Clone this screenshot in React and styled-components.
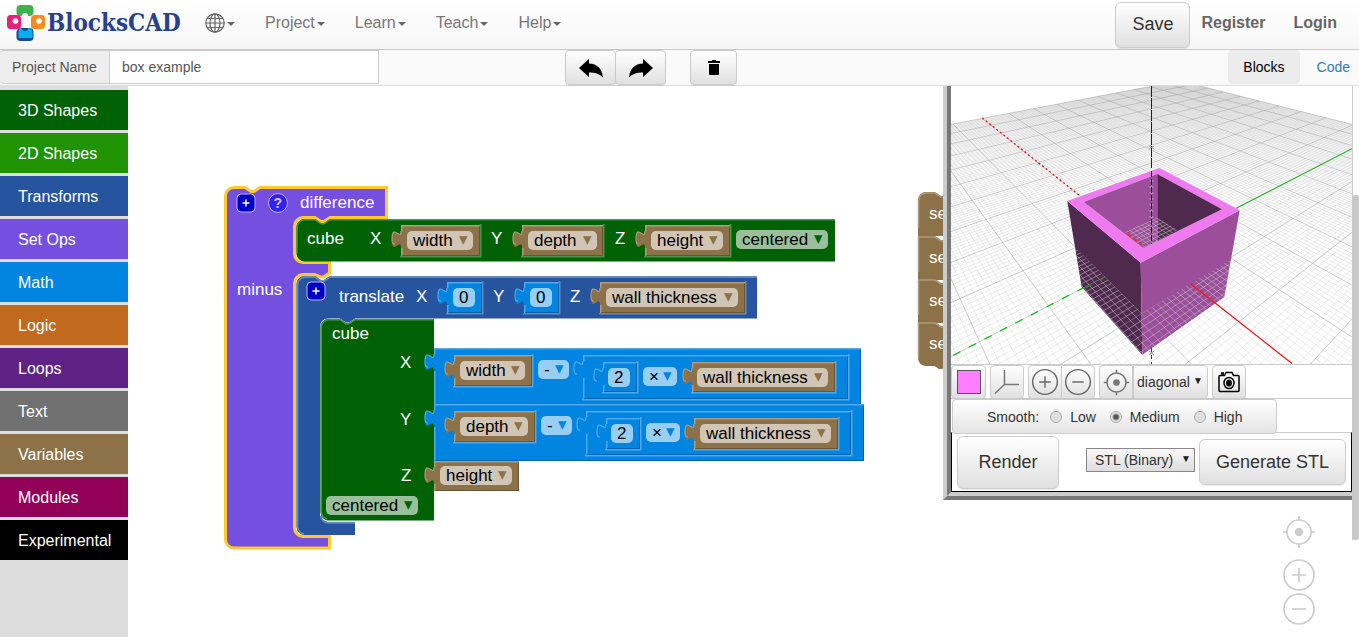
import React from "react";
import styled, { createGlobalStyle } from "styled-components";

const Global = createGlobalStyle`
  *, *::before, *::after { box-sizing: border-box; }
  body { margin: 0; background: #fff; font-family: "Liberation Sans", Arial, sans-serif; font-size: 14px; color: #333; }
  button, input, select { font-family: inherit; margin: 0; }
`;

const colors = {
  shapes: "#006205",
  transforms: "#26549f",
  setOps: "#744fe0",
  math: "#0185e1",
  variables: "#8c7149",
};

const categories = [
  ["3D Shapes", colors.shapes],
  ["2D Shapes", "#209303"],
  ["Transforms", colors.transforms],
  ["Set Ops", colors.setOps],
  ["Math", colors.math],
  ["Logic", "#c1691f"],
  ["Loops", "#5e2385"],
  ["Text", "#717171"],
  ["Variables", colors.variables],
  ["Modules", "#920057"],
  ["Experimental", "#000000"],
];

/* ---------- page ---------- */

const Page = styled.div`
  display: flex;
  flex-direction: column;
  min-height: 100vh;
`;

const Navbar = styled.header`
  display: flex;
  align-items: center;
  height: 50px;
  padding-left: 7px;
  padding-right: 22px;
  background: linear-gradient(#fff, #f6f6f6);
  border-bottom: 1px solid #c8c8c8;
`;

const Brand = styled.a`
  display: flex;
  align-items: center;
  width: 183px;
  height: 44px;
  padding-bottom: 3px;
  color: #27408f;
  font-family: "DejaVu Serif Condensed", "DejaVu Serif", serif;
  font-size: 24px;
  font-weight: bold;
  line-height: 28px;
  text-decoration: none;
  white-space: nowrap;
`;

const Menu = styled.nav`
  display: flex;
  flex: 1;
`;

const MenuButton = styled.button`
  display: flex;
  align-items: center;
  height: 44px;
  padding: 0 15px 4px;
  border: 0;
  background: none;
  color: #777;
  font-size: 16px;
  line-height: 20px;
  &::after {
    content: "";
    margin-left: 2px;
    margin-top: 2px;
    border: 4px solid transparent;
    border-top-color: #666;
    border-bottom: 0;
  }
`;

const Raised = styled.button`
  display: flex;
  align-items: center;
  justify-content: center;
  padding: 0;
  border: 1px solid #ccc;
  border-radius: ${(p) => p.$radius || "4px"};
  background: linear-gradient(#fff, #e0e0e0);
  box-shadow: 0 1px 1px rgba(0, 0, 0, 0.08);
  color: #333;
  font-size: 18px;
  width: ${(p) => p.$w}px;
  height: ${(p) => p.$h}px;
`;

const Account = styled.div`
  display: flex;
  align-items: center;
  & > a {
    margin-left: 28px;
    padding-bottom: 4px;
    color: #666;
    font-size: 16px;
    font-weight: bold;
    text-decoration: none;
  }
  & > button + a {
    margin-left: 11px;
  }
`;

const Toolbar = styled.div`
  display: flex;
  height: 36px;
  background: #fafafa;
  border-bottom: 1px solid #ddd;
`;

const NameLabel = styled.label`
  display: flex;
  align-items: center;
  width: 110px;
  height: 34px;
  padding-left: 12px;
  background: #eee;
  border: 1px solid #ccc;
  border-width: 1px 0 1px 0;
  border-radius: 4px 0 0 4px;
  color: #555;
`;

const NameInput = styled.input`
  width: 270px;
  height: 34px;
  padding: 0 12px;
  border: 1px solid #ccc;
  margin-left: -1px;
  color: #555;
  font-size: 14px;
`;

const Actions = styled.div`
  display: flex;
  flex: 1;
  gap: 24px;
  padding-left: 186px;
`;

const Group = styled.div`
  display: flex;
  & > * + * {
    margin-left: -1px;
  }
`;

const Tabs = styled.nav`
  display: flex;
`;

const Tab = styled.a`
  display: flex;
  align-items: center;
  height: 34px;
  padding: 0 ${(p) => (p.$active ? 15 : 9)}px 0 ${(p) => (p.$active ? 15 : 17)}px;
  border-radius: 4px;
  background: ${(p) => (p.$active ? "#ececec" : "transparent")};
  color: ${(p) => (p.$active ? "#000" : "#337ab7")};
  text-decoration: none;
`;

const Main = styled.main`
  display: flex;
  flex: 1;
`;

const Sidebar = styled.nav`
  display: flex;
  flex-direction: column;
  gap: 3px;
  width: 128px;
  padding-top: 4px;
  background: #ddd;
`;

const Category = styled.button`
  height: 40px;
  padding: 2px 0 0 18px;
  border: 0;
  background: ${(p) => p.$color};
  color: #fff;
  font-size: 16px;
  text-align: left;
`;

/* ---------- block workspace ---------- */

const Workspace = styled.section`
  position: relative;
  flex: 1;
  overflow: hidden;
`;

const BlockLayer = styled.svg`
  position: absolute;
  inset: 0;
  width: 100%;
  height: 100%;
  font-family: "Liberation Sans", Arial, sans-serif;
  font-size: 17px;
`;

const FieldBox = styled.span`
  position: absolute;
  left: ${(p) => p.$x}px;
  top: ${(p) => p.$y}px;
  width: ${(p) => p.$w}px;
  height: 19px;
  border-radius: 5px;
  background: ${(p) => p.$tint};
  &::after {
    content: "${(p) => (p.$menu ? "▾" : "")}";
    position: absolute;
    right: 5px;
    top: -1px;
    color: ${(p) => p.$color};
    font-size: 17px;
    line-height: 19px;
    pointer-events: none;
  }
`;

const FieldSelect = styled.select`
  appearance: none;
  display: block;
  width: 100%;
  height: 19px;
  padding: 0 0 0 6px;
  border: 0;
  background: none;
  color: #000;
  font-size: 17px;
  line-height: 19px;
`;

const FieldInput = styled.input`
  display: block;
  width: 100%;
  height: 19px;
  padding: 0 0 0 6px;
  border: 0;
  background: none;
  color: #000;
  font-size: 17px;
  line-height: 19px;
`;

const TAB = "v6 c0,11 -9,-9 -9,8.5 s9,-3 9,8.5";
const NOTCH = "l6,4 3,0 6,-4";

const tints = {
  math: "#99cef3",
  variables: "#d1c6b6",
  shapes: "#99c09b",
};

const valueBlocks = [
  { x: 401, y: 225, w: 79, h: 31, kind: "variables", nested: "shapes" },
  { x: 522, y: 225, w: 81, h: 31, kind: "variables", nested: "shapes" },
  { x: 645, y: 225, w: 85, h: 31, kind: "variables", nested: "shapes" },
  { x: 447, y: 282, w: 35, h: 31, kind: "math", nested: "transforms" },
  { x: 524, y: 282, w: 35, h: 31, kind: "math", nested: "transforms" },
  { x: 600, y: 282, w: 145, h: 31, kind: "variables", nested: "transforms" },
  { x: 434, y: 348, w: 427, h: 57, kind: "math" },
  { x: 454, y: 355, w: 78, h: 31, kind: "variables", nested: "math" },
  { x: 583, y: 355, w: 265, h: 44, kind: "math", nested: "math" },
  { x: 603, y: 362, w: 34, h: 30, kind: "math", nested: "math" },
  { x: 692, y: 362, w: 143, h: 30, kind: "variables", nested: "math" },
  { x: 434, y: 404, w: 430, h: 57, kind: "math" },
  { x: 454, y: 411, w: 81, h: 31, kind: "variables", nested: "math" },
  { x: 586, y: 411, w: 265, h: 44, kind: "math", nested: "math" },
  { x: 606, y: 418, w: 34, h: 31, kind: "math", nested: "math" },
  { x: 694, y: 418, w: 144, h: 31, kind: "variables", nested: "math" },
  { x: 434, y: 461, w: 85, h: 30, kind: "variables" },
];

const lights = {
  math: "#4fa9ea",
  variables: "#ae9b80",
  shapes: "#4d914f",
  transforms: "#6787bc",
};

const fields = [
  { x: 407, y: 231, w: 66, text: "width", kind: "variables" },
  { x: 528, y: 231, w: 69, text: "depth", kind: "variables" },
  { x: 651, y: 231, w: 72, text: "height", kind: "variables" },
  { x: 736, y: 230, w: 92, text: "centered", kind: "shapes" },
  { x: 453, y: 288, w: 22, text: "0", kind: "math", input: true },
  { x: 530, y: 288, w: 22, text: "0", kind: "math", input: true },
  { x: 606, y: 288, w: 132, text: "wall thickness", kind: "variables" },
  { x: 460, y: 361, w: 65, text: "width", kind: "variables" },
  { x: 538, y: 360, w: 31, text: "-", kind: "math" },
  { x: 608, y: 368, w: 22, text: "2", kind: "math", input: true },
  { x: 643, y: 367, w: 34, text: "×", kind: "math" },
  { x: 697, y: 368, w: 131, text: "wall thickness", kind: "variables" },
  { x: 460, y: 417, w: 68, text: "depth", kind: "variables" },
  { x: 541, y: 416, w: 31, text: "-", kind: "math" },
  { x: 611, y: 424, w: 22, text: "2", kind: "math", input: true },
  { x: 646, y: 423, w: 34, text: "×", kind: "math" },
  { x: 700, y: 424, w: 131, text: "wall thickness", kind: "variables" },
  { x: 440, y: 466, w: 72, text: "height", kind: "variables" },
  { x: 326, y: 496, w: 92, text: "centered", kind: "shapes" },
];

const labels = [
  ["difference", 300, 208],
  ["minus", 237, 295],
  ["cube", 307, 244],
  ["X", 370, 244],
  ["Y", 491, 244],
  ["Z", 615, 244],
  ["translate", 339, 302],
  ["X", 416, 302],
  ["Y", 493, 302],
  ["Z", 570, 302],
  ["cube", 332, 339],
  ["X", 400, 368],
  ["Y", 400, 425],
  ["Z", 401, 481],
];

/* Block coordinates are stored relative to the window; the workspace starts here. */
const ORIGIN = { x: 128, y: 86 };

function ValueBlock({ x, y, w, h, kind, nested }) {
  return (
    <g>
      <path d={`M${x},${y} ${TAB} V${y + h} H${x + w} V${y} Z`} fill={colors[kind]} />
      <path
        d={`M${x + 0.75},${y + h} V${y + 23} m0,-17 V${y + 0.75} H${x + w}`}
        fill="none"
        stroke={lights[kind]}
        strokeWidth="1.5"
      />
      <path d={`M${x},${y + 6} c0,11 -9,-9 -9,8.5 q0,5 3,4.5`} fill="none" stroke={lights[kind]} strokeWidth="1.2" />
      <path d={`M${x + w - 0.5},${y + 1} V${y + h - 0.5} H${x + 1}`} fill="none" stroke="#000" strokeOpacity=".25" />
      {nested && (
        <path
          d={`M${x + w + 0.75},${y - 1} V${y + h + 0.75} H${x - 1}`}
          fill="none"
          stroke={lights[nested]}
          strokeWidth="1.5"
        />
      )}
    </g>
  );
}

function PlusIcon({ x, y }) {
  return (
    <g>
      <rect x={x} y={y} width="18" height="18" rx="4" fill="#0000c8" stroke="#b9b4f0" />
      <path d={`M${x + 5.5},${y + 9} h7 M${x + 9},${y + 5.5} v7`} stroke="#fff" strokeWidth="1.5" />
    </g>
  );
}

function Blocks() {
  return (
    <BlockLayer aria-label="Block diagram">
      <g transform={`translate(${-ORIGIN.x},${-ORIGIN.y})`}>
        <path
          d={`M225.5,196 a8.5,8.5 0 0 1 8.5,-8.5 H245 ${NOTCH} H386.5 V217.5 H330 l-6,4 -3,0 -6,-4 H303 a8.5,8.5 0 0 0 -8.5,8.5 V254 a8.5,8.5 0 0 0 8.5,8.5 H329.5 V273 l-6,4 -3,0 -6,-2.5 H303 a8.5,8.5 0 0 0 -8.5,8.5 V528 a8.5,8.5 0 0 0 8.5,8.5 H329.5 V548 H234 a8.5,8.5 0 0 1 -8.5,-8.5 Z`}
          fill={colors.setOps}
          stroke="#ffc82f"
          strokeWidth="3"
        />
        <path
          d={`M296.5,227 a8,8 0 0 1 8,-8 H315 ${NOTCH} H835 V261.5 H305 a8,8 0 0 1 -8.5,-8 Z`}
          fill={colors.shapes}
        />
        <path
          d={`M297,253 V228 a8,8 0 0 1 8,-8.25 H315 ${NOTCH} H835`}
          fill="none"
          stroke={lights.shapes}
          strokeWidth="1.5"
        />
        <path
          d={`M296.5,284 a8,8 0 0 1 8,-8 H315 ${NOTCH} H757 V318.5 H355 l-6,4 -3,0 -6,-4 H328 a8,8 0 0 0 -8,8 V514 a8,8 0 0 0 8,8 H355 V535 H305 a8,8 0 0 1 -8.5,-8 Z`}
          fill={colors.transforms}
        />
        <path
          d={`M304,534 a8,8 0 0 1 -6.5,-7 V285 a8,8 0 0 1 8,-8 H315 ${NOTCH} H757 M320.75,516 a8,8 0 0 0 7.5,6.75 H355`}
          fill="none"
          stroke={lights.transforms}
          strokeWidth="1.8"
        />
        <path
          d={`M320.5,327 a8,8 0 0 1 8,-8 H340 ${NOTCH} H434 V520.5 H329 a8,8 0 0 1 -8.5,-8 Z`}
          fill={colors.shapes}
        />
        <path
          d={`M327,519 a8,8 0 0 1 -5.7,-7 V328 a8,8 0 0 1 8,-8.25 H340 ${NOTCH} H434`}
          fill="none"
          stroke={lights.shapes}
          strokeWidth="1.5"
        />
        {valueBlocks.map((b) => (
          <ValueBlock key={`${b.x}-${b.y}`} {...b} />
        ))}
        <PlusIcon x={237} y={194} />
        <PlusIcon x={307} y={282} />
        <circle cx="278" cy="203" r="9.5" fill="#3322ee" stroke="#b9b4f0" />
        <text x="273.5" y="208" fill="#d0cdfa" fontSize="14" fontWeight="bold">
          ?
        </text>
        {labels.map(([text, x, y]) => (
          <text key={`${x}-${y}`} x={x} y={y} fill="#fff">
            {text}
          </text>
        ))}
        {[192, 236, 279, 322].map((y, i) => (
          <g key={y}>
            <path
              d={`M918,${y + (i ? 0 : 8)} ${i ? "" : "a8,8 0 0 1 8,-8"} H935 ${NOTCH} H990 V${y + 44} ${
                i === 3 ? "H926 a8,8 0 0 1 -8,-8" : "H918"
              } Z`}
              fill={colors.variables}
            />
            {i === 3 && <path d="M933,365 l6,4 3,0 6,-4 Z" fill={colors.variables} />}
            <path
              d={`M918.5,${y + 36} V${y + (i ? 1 : 9)} ${i ? "" : "a8,8 0 0 1 8,-8"} H935 ${NOTCH}`}
              fill="none"
              stroke={lights.variables}
              strokeWidth="1.5"
            />
            <text x="929" y={y + 27} fill="#fff">
              set
            </text>
          </g>
        ))}
      </g>
    </BlockLayer>
  );
}

function Field({ x, y, w, text, kind, input }) {
  return (
    <FieldBox $x={x - ORIGIN.x} $y={y - ORIGIN.y} $w={w} $tint={tints[kind]} $color={colors[kind]} $menu={!input}>
      {input ? (
        <FieldInput aria-label="Number" defaultValue={text} />
      ) : (
        <FieldSelect aria-label={text} defaultValue={text}>
          <option>{text}</option>
        </FieldSelect>
      )}
    </FieldBox>
  );
}

/* ---------- 3D viewer ---------- */

const Viewer = styled.aside`
  position: absolute;
  top: 0;
  right: 7px;
  width: 409px;
  background: #fff;
  border: 8px ridge #ccc;
  border-width: 0 0 8px 8px;
`;

const Scene = styled.svg`
  display: block;
  width: 100%;
  height: 278px;
`;

const ViewRow = styled.div`
  display: flex;
  gap: 4px;
  height: 34px;
  border-top: 1px solid #ccc;
`;

const SmoothBar = styled.fieldset`
  display: flex;
  align-items: center;
  width: 325px;
  height: 35px;
  margin: 0 0 0 1px;
  padding: 0 0 0 34px;
  border: 1px solid #ccc;
  border-radius: 4px;
  background: linear-gradient(#fff, #e4e4e4);
`;

const SmoothTitle = styled.span`
  margin-right: 11px;
`;

const RadioLabel = styled.label`
  display: flex;
  align-items: center;
  gap: 8px;
  margin-right: 14px;
`;

const Radio = styled.input`
  appearance: none;
  width: 12px;
  height: 12px;
  margin: 0;
  border: 1px solid #aaa;
  border-radius: 50%;
  background: ${(p) =>
    p.defaultChecked ? "radial-gradient(circle, #555 0 2px, #e4e4e4 4px)" : "#e0e0e0"};
`;

const RenderBar = styled.div`
  display: flex;
  align-items: center;
  height: 60px;
  padding: 0 5px;
  border: 1px solid #000;
  border-top-color: #ccc;
`;

const SelectBox = styled.span`
  position: relative;
  display: flex;
  margin-left: ${(p) => (p.$plain ? 0 : 27)}px;
  margin-right: ${(p) => (p.$plain ? 0 : 4)}px;
  margin-bottom: ${(p) => (p.$plain ? 0 : 5)}px;
  &::after {
    content: "▼";
    position: absolute;
    right: ${(p) => (p.$plain ? 5 : 4)}px;
    top: ${(p) => (p.$plain ? 10 : 5)}px;
    font-size: 10px;
    line-height: 12px;
    color: #222;
    pointer-events: none;
  }
`;

const ViewSelect = styled.select`
  appearance: none;
  width: 75px;
  height: 34px;
  padding: 0 0 0 3px;
  border: 1px solid #ccc;
  border-radius: 0 4px 4px 0;
  background: linear-gradient(#fff, #e0e0e0);
  color: #333;
  font-size: 14px;
`;

const FormatSelect = styled.select`
  appearance: none;
  width: 109px;
  height: 24px;
  padding: 0 0 0 8px;
  border: 1px solid #888;
  border-radius: 0;
  background: linear-gradient(#f8f8f8, #ddd);
  color: #333;
  font-size: 14px;
`;

const PushRight = styled.span`
  margin-left: auto;
`;

const Scrollbar = styled.div`
  position: absolute;
  top: 0;
  right: 0;
  width: 7px;
  height: 454px;
  border-left: 1px solid #ccc;
  background: #fff;
  &::after {
    content: "";
    position: absolute;
    top: 109px;
    bottom: 0;
    left: -1px;
    right: 0;
    border-radius: 3px;
    background: #c8c8c8;
  }
`;

const ZoomTools = styled.div`
  position: absolute;
  top: 429px;
  right: 43px;
  display: flex;
  flex-direction: column;
`;

const BareButton = styled.button`
  display: block;
  width: 34px;
  height: 34px;
  margin-bottom: ${(p) => p.$after || 0}px;
  padding: 0;
  border: 0;
  background: none;
  color: #ccc;
`;

const CAMERA = { distance: 61, focal: 335.6, shift: -5, tilt: (55 * Math.PI) / 180, turn: (-51 * Math.PI) / 180 };

function rotated(x, y) {
  const { turn, tilt, distance } = CAMERA;
  const u = x * Math.cos(turn) - y * Math.sin(turn);
  const v = x * Math.sin(turn) + y * Math.cos(turn);
  return { u, up: v * Math.cos(tilt) + CAMERA.shift, depth: distance + v * Math.sin(tilt) };
}

function groundLine(a, b) {
  let p = rotated(...a);
  let q = rotated(...b);
  const near = 12;
  if (p.depth < near && q.depth < near) return "";
  const cut = (from, to) => {
    const t = (near - from.depth) / (to.depth - from.depth);
    return { u: from.u + (to.u - from.u) * t, up: from.up + (to.up - from.up) * t, depth: near };
  };
  if (p.depth < near) p = cut(p, q);
  if (q.depth < near) q = cut(q, p);
  const s = (r) =>
    `${(200.5 + (CAMERA.focal * r.u) / r.depth).toFixed(1)},${(139 - (CAMERA.focal * r.up) / r.depth).toFixed(1)}`;
  return `M${s(p)}L${s(q)}`;
}

function gridPath(step) {
  let d = "";
  for (let i = -100; i <= 100; i += step) {
    if (step === 1 && i % 10 === 0) continue;
    d += groundLine([i, -100], [i, 100]) + groundLine([-100, i], [100, i]);
  }
  return d;
}

const minorGrid = gridPath(1);
const majorGrid = gridPath(10);

function ViewerScene() {
  return (
    <Scene viewBox="0 0 401 278" role="img" aria-label="Rendered open box on a grid">
      <defs>
        <clipPath id="sunk">
          <path d="M124.7,162 L190.7,227 L280.7,173 L273.3,211 L191.3,268.7 L130.7,201 Z M174,146 L206.3,131.7 L226.7,144 L192.3,162.3 Z" />
        </clipPath>
      </defs>
      <path d={minorGrid} stroke="#bbb" strokeOpacity=".28" fill="none" />
      <path d={majorGrid} stroke="#888" strokeOpacity=".42" fill="none" />
      <path d="M31.3,32 L128,109" stroke="#f11" strokeWidth="1.4" strokeDasharray="2 2.5" />
      <path d="M285,122.3 L401,62.7" stroke="#2b2" strokeWidth="1.2" />
      <path d="M2.3,269.3 L134,201" stroke="#2b2" strokeWidth="1.4" strokeDasharray="8 9.5" />
      <path d="M200.5,262 V278" stroke="#333" strokeDasharray="4 3" />
      <path d="M116.3,115 L189.7,176.7 L191.3,268.7 L130.7,201 Z" fill="#50294f" />
      <path d="M189.7,176.7 L288.7,124.3 L273.3,211 L191.3,268.7 Z" fill="#9b4f9b" />
      <path
        d="M116.3,115 L208.3,82 L288.7,124.3 L189.7,176.7 Z M132.7,116 L192.3,162.3 L271,123.3 L206.3,88 Z"
        fill="#ef79ef"
        fillRule="evenodd"
      />
      <path d="M132.7,116 L206.3,88 V155.3 L192.3,162.3 Z" fill="#9b4f9b" />
      <path d="M206.3,88 L271,123.3 L206.3,155.3 Z" fill="#50294f" />
      <g clipPath="url(#sunk)" fill="none">
        <path d={minorGrid} stroke="#ccc" strokeOpacity=".5" />
        <path d={majorGrid} stroke="#999" strokeOpacity=".5" />
      </g>
      <path d="M177,148 L193,161" stroke="#f22" strokeWidth="1.4" strokeDasharray="4 3" />
      <path d="M239.7,197.7 L341,277.5" stroke="#f11" strokeWidth="1.2" />
      <path d="M134.5,202 L156,190" stroke="#1a9a1a" strokeWidth="1.2" strokeDasharray="7 9" />
      <path d="M200.5,0 V82" stroke="#1b1b4d" strokeDasharray="11 1" />
      <path d="M198,60 l5,3 m0,-3 l-5,3 M198,265 l5,4 m0,-4 l-5,4" stroke="#999" fill="none" />
      <path d="M200.5,88 V132" stroke="#b9a3b9" strokeWidth="4" strokeDasharray="2 4" strokeOpacity=".6" />
      <path d="M200.5,85 V158" stroke="#1b1b4d" strokeDasharray="6 2" />
    </Scene>
  );
}

/* ---------- icons ---------- */

function CircleIcon({ minus, size = 34, color = "currentColor", width = 1.7 }) {
  return (
    <svg width={size} height={size} viewBox="0 0 34 34" fill="none" stroke={color} strokeWidth={width}>
      <circle cx="17" cy="17" r="15" />
      <path d={minus ? "M10 17h14" : "M10 17h14M17 10v14"} />
    </svg>
  );
}

function TargetIcon({ size = 34, color = "currentColor", width = 1.7 }) {
  return (
    <svg width={size} height={size} viewBox="0 0 34 34" fill="none" stroke={color} strokeWidth={width}>
      <circle cx="17" cy="17" r="12" />
      <path d="M17 1v4M17 29v4M1 17h4M29 17h4" />
      <circle cx="17" cy="17" r="4.2" fill={color} stroke="none" />
    </svg>
  );
}

function ArrowIcon({ flip }) {
  return (
    <svg width="24" height="20" viewBox="0 0 24 20">
      <path
        transform={flip ? "translate(24 0) scale(-1 1)" : undefined}
        d="M0 10 10 1V5.5C18 6 23 10 24 19.5 20 15.5 16 14.5 10 14.5V19Z"
      />
    </svg>
  );
}

function LogoMark() {
  return (
    <svg width="40" height="38" viewBox="0 0 40 38">
      <path
        d="M9.5 5q0-4 4-4h9q4 0 4 4v4q-1 3-4 3h-1q-1-3-3.500-3t-3.500 3h-1q-4 0-4-4z"
        fill="#3bb24a"
      />
      <path d="M9.500 28q1-4 4-4h9q4 0 4 4v5q0 4-4 4h-9q-4 0-4-4z" fill="#16498e" />
      <path d="M11.500 28q0-4 3-4 1 3 3.500 3t3.500-3q4 0 4 4v6h-14z" fill="#08aef0" />
      <rect x="0" y="11" width="14" height="14" rx="3.5" fill="#ed1e79" />
      <circle cx="8.500" cy="17" r="2.800" fill="#fff" />
      <rect x="24" y="11" width="14" height="14" rx="3.5" fill="#f68b1f" />
      <circle cx="32" cy="17" r="2.800" fill="#fff" />
    </svg>
  );
}

function GlobeIcon() {
  return (
    <svg width="20" height="20" viewBox="0 0 20 20" fill="none" stroke="#666" strokeWidth="1.2">
      <circle cx="10" cy="10" r="9.2" />
      <ellipse cx="10" cy="10" rx="5" ry="9.2" />
      <path d="M10 1v18M1 10h18M2.3 5.5h15.4M2.3 14.5h15.4" />
    </svg>
  );
}

const smoothLevels = ["Low", "Medium", "High"];

export default function App() {
  return (
    <Page>
      <Global />
      <Navbar>
        <Brand href="#">
          <LogoMark />
          BlocksCAD
        </Brand>
        <Menu aria-label="Main">
          <MenuButton aria-label="Language">
            <GlobeIcon />
          </MenuButton>
          {["Project", "Learn", "Teach", "Help"].map((m) => (
            <MenuButton key={m}>{m}</MenuButton>
          ))}
        </Menu>
        <Account>
          <Raised $w={75} $h={46} $radius="6px">
            Save
          </Raised>
          <a href="#register">Register</a>
          <a href="#login">Login</a>
        </Account>
      </Navbar>
      <Toolbar>
        <NameLabel htmlFor="project-name">Project Name</NameLabel>
        <NameInput id="project-name" defaultValue="box example" />
        <Actions>
          <Group>
            <Raised $w={51} $h={35} aria-label="Undo">
              <ArrowIcon />
            </Raised>
            <Raised $w={51} $h={35} aria-label="Redo">
              <ArrowIcon flip />
            </Raised>
          </Group>
          <Raised $w={47} $h={35} aria-label="Delete">
            <svg width="12" height="16" viewBox="0 0 12 16">
              <path d="M0 1h3.5l1-1h3l1 1H12v2H0zM1 4h10v10q0 1-1 1H2q-1 0-1-1z" />
            </svg>
          </Raised>
        </Actions>
        <Tabs aria-label="View">
          <Tab href="#blocks" $active>
            Blocks
          </Tab>
          <Tab href="#code">Code</Tab>
        </Tabs>
      </Toolbar>
      <Main>
        <Sidebar aria-label="Block categories">
          {categories.map(([name, color]) => (
            <Category key={name} $color={color}>
              {name}
            </Category>
          ))}
        </Sidebar>
        <Workspace>
          <Blocks />
          {fields.map((f) => (
            <Field key={`${f.x}-${f.y}`} {...f} />
          ))}
          <Viewer>
            <ViewerScene />
            <ViewRow>
              <Raised $w={35} $h={34} aria-label="Color">
                <svg width="24" height="24">
                  <rect x=".5" y=".5" width="23" height="23" fill="#ff7dff" stroke="#555" />
                </svg>
              </Raised>
              <Raised $w={34} $h={34} aria-label="Axes">
                <svg width="26" height="26" fill="none" stroke="#777" strokeWidth="1.5">
                  <path d="M10.500 1v14.500H25M10.500 15.500 1 24.500" />
                </svg>
              </Raised>
              <Group>
                <Raised $w={34} $h={34} $radius="4px 0 0 4px" aria-label="Zoom in">
                  <CircleIcon size={28} color="#666" />
                </Raised>
                <Raised $w={34} $h={34} $radius="0 4px 4px 0" aria-label="Zoom out">
                  <CircleIcon minus size={28} color="#666" />
                </Raised>
              </Group>
              <Group>
                <Raised $w={34} $h={34} $radius="4px 0 0 4px" aria-label="Reset view">
                  <TargetIcon size={27} color="#777" width={2} />
                </Raised>
                <SelectBox $plain>
                  <ViewSelect aria-label="Camera view" defaultValue="diagonal">
                    <option>diagonal</option>
                  </ViewSelect>
                </SelectBox>
              </Group>
              <Raised $w={34} $h={34} aria-label="Take picture">
                <svg width="22" height="22" viewBox="0 0 22 22" fill="none" stroke="#000" strokeWidth="1.5">
                  <path d="M2 4.500h4.500l1.500-3h6l1.500 3H20q1 0 1 1v14q0 1-1 1H2q-1 0-1-1v-14q0-1 1-1z" />
                  <ellipse cx="11" cy="12" rx="5" ry="5.500" />
                  <ellipse cx="11" cy="12" rx="2.200" ry="2.800" fill="#000" />
                  <path d="M3 2.500h3" strokeWidth="2.500" />
                </svg>
              </Raised>
            </ViewRow>
            <ViewRow>
              <SmoothBar aria-label="Smooth">
                <SmoothTitle>Smooth:</SmoothTitle>
                {smoothLevels.map((level) => (
                  <RadioLabel key={level}>
                    <Radio type="radio" name="smooth" defaultChecked={level === "Medium"} />
                    {level}
                  </RadioLabel>
                ))}
              </SmoothBar>
            </ViewRow>
            <RenderBar>
              <Raised $w={102} $h={53} $radius="6px">
                Render
              </Raised>
              <SelectBox>
                <FormatSelect aria-label="Export format" defaultValue="STL (Binary)">
                  <option>STL (Binary)</option>
                </FormatSelect>
              </SelectBox>
              <PushRight>
                <Raised $w={147} $h={46} $radius="6px">
                  Generate STL
                </Raised>
              </PushRight>
            </RenderBar>
          </Viewer>
          <Scrollbar />
          <ZoomTools>
            <BareButton $after={9} aria-label="Center workspace">
              <TargetIcon />
            </BareButton>
            <BareButton aria-label="Zoom workspace in">
              <CircleIcon />
            </BareButton>
            <BareButton aria-label="Zoom workspace out">
              <CircleIcon minus />
            </BareButton>
          </ZoomTools>
        </Workspace>
      </Main>
    </Page>
  );
}
